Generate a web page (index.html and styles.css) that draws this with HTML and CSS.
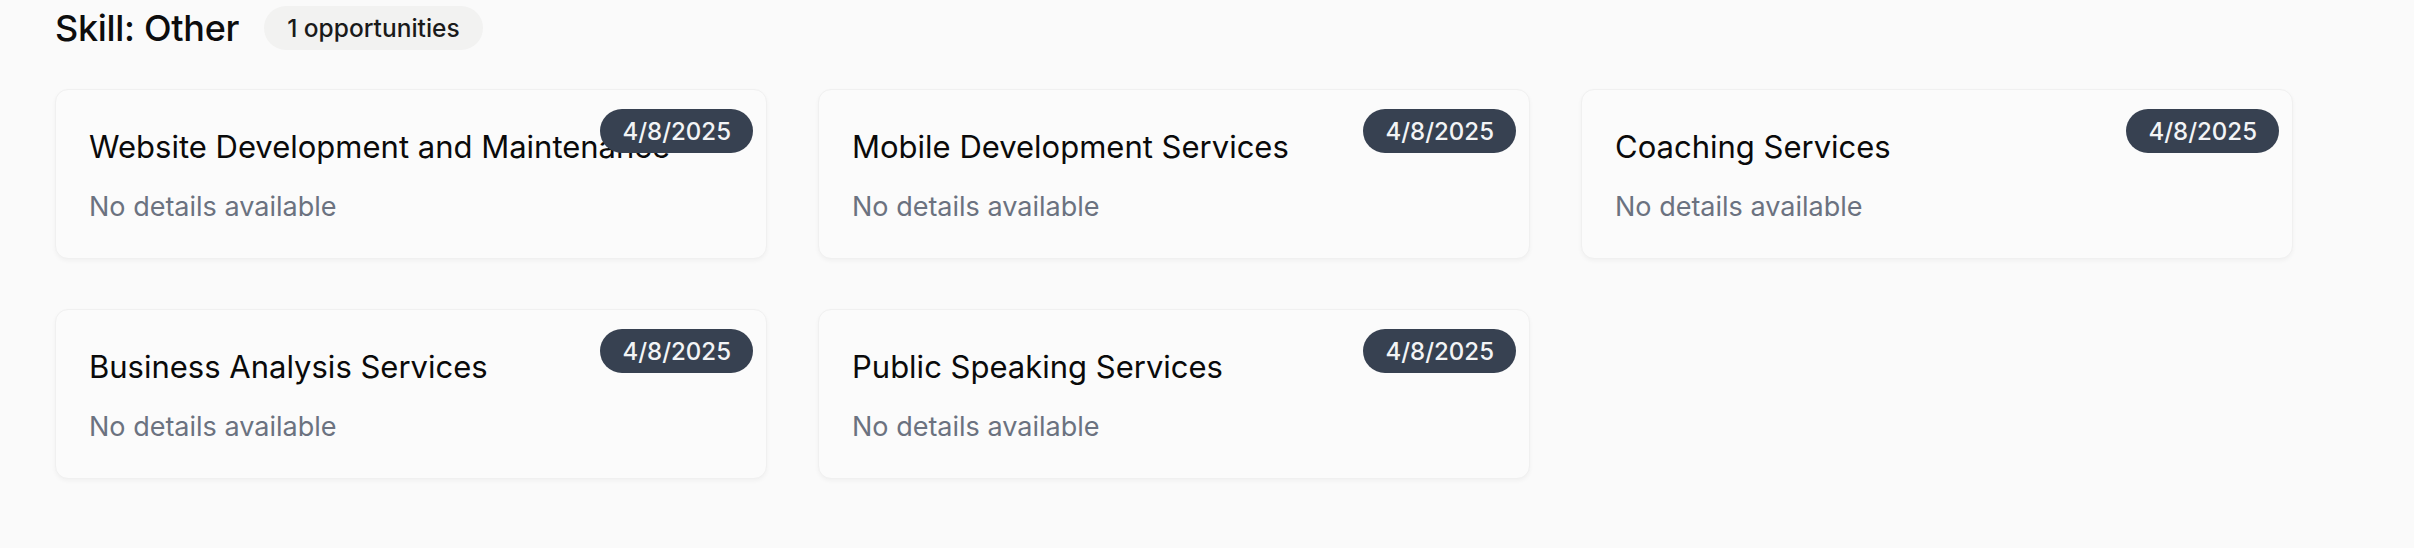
FILE: index.html
```html
<!DOCTYPE html>
<html lang="en">
<head>
<meta charset="utf-8">
<title>Skill: Other</title>
<link rel="stylesheet" href="styles.css">
</head>
<body>
<main class="page">
  <header class="section-head">
    <h2 class="section-title">Skill: Other</h2>
    <span class="count-pill">1 opportunities</span>
  </header>
  <section class="card-grid">
    <article class="card">
      <span class="date-pill">4/8/2025</span>
      <h3 class="card-title">Website Development and Maintenance</h3>
      <p class="card-desc">No details available</p>
    </article>
    <article class="card">
      <span class="date-pill">4/8/2025</span>
      <h3 class="card-title">Mobile Development Services</h3>
      <p class="card-desc">No details available</p>
    </article>
    <article class="card">
      <span class="date-pill">4/8/2025</span>
      <h3 class="card-title">Coaching Services</h3>
      <p class="card-desc">No details available</p>
    </article>
    <article class="card">
      <span class="date-pill">4/8/2025</span>
      <h3 class="card-title">Business Analysis Services</h3>
      <p class="card-desc">No details available</p>
    </article>
    <article class="card">
      <span class="date-pill">4/8/2025</span>
      <h3 class="card-title">Public Speaking Services</h3>
      <p class="card-desc">No details available</p>
    </article>
  </section>
</main>
</body>
</html>
```

FILE: styles.css
```css
* { box-sizing: border-box; }
html, body { margin: 0; padding: 0; }
body {
  background: #fafafa;
  font-family: Inter, "Noto Sans", "Liberation Sans", sans-serif;
  color: #0a0a0a;
  width: 2414px;
  height: 548px;
  overflow: hidden;
}
.page {
  padding: 6px 56px 0 55px;
}
.section-head {
  display: flex;
  align-items: center;
  gap: 25px;
  height: 44px;
}
.section-title {
  margin: 0;
  font-size: 36px;
  font-weight: 500;
  line-height: 44px;
  color: #0d0d0d;
  letter-spacing: -0.3px;
}
.count-pill {
  display: inline-flex;
  align-items: center;
  height: 44px;
  padding: 0 23px;
  border-radius: 22px;
  background: #f2f2f1;
  color: #1a1a1a;
  font-size: 24.5px;
  font-weight: 500;
}
.card-grid {
  margin-top: 39px;
  display: grid;
  grid-template-columns: repeat(3, 712px);
  column-gap: 51px;
  row-gap: 50px;
}
.card {
  position: relative;
  height: 170px;
  padding: 32px 33px;
  background: #fbfbfb;
  border: 1px solid #f0f0f0;
  border-radius: 13px;
  box-shadow: 0 2px 4px rgba(0, 0, 0, 0.04);
}
.date-pill {
  position: absolute;
  top: 19px;
  right: 13px;
  height: 44px;
  padding: 0 22px;
  display: inline-flex;
  align-items: center;
  border-radius: 22px;
  background: #374151;
  color: #f3f4f6;
  font-size: 24px;
  font-weight: 500;
}
.card-title {
  margin: 2px 0 0;
  font-size: 31px;
  font-weight: 400;
  line-height: 45px;
  color: #0a0a0a;
  white-space: nowrap;
}
.card-desc {
  margin: 18px 0 0;
  font-size: 27px;
  line-height: 40px;
  color: #6b7280;
}
```
